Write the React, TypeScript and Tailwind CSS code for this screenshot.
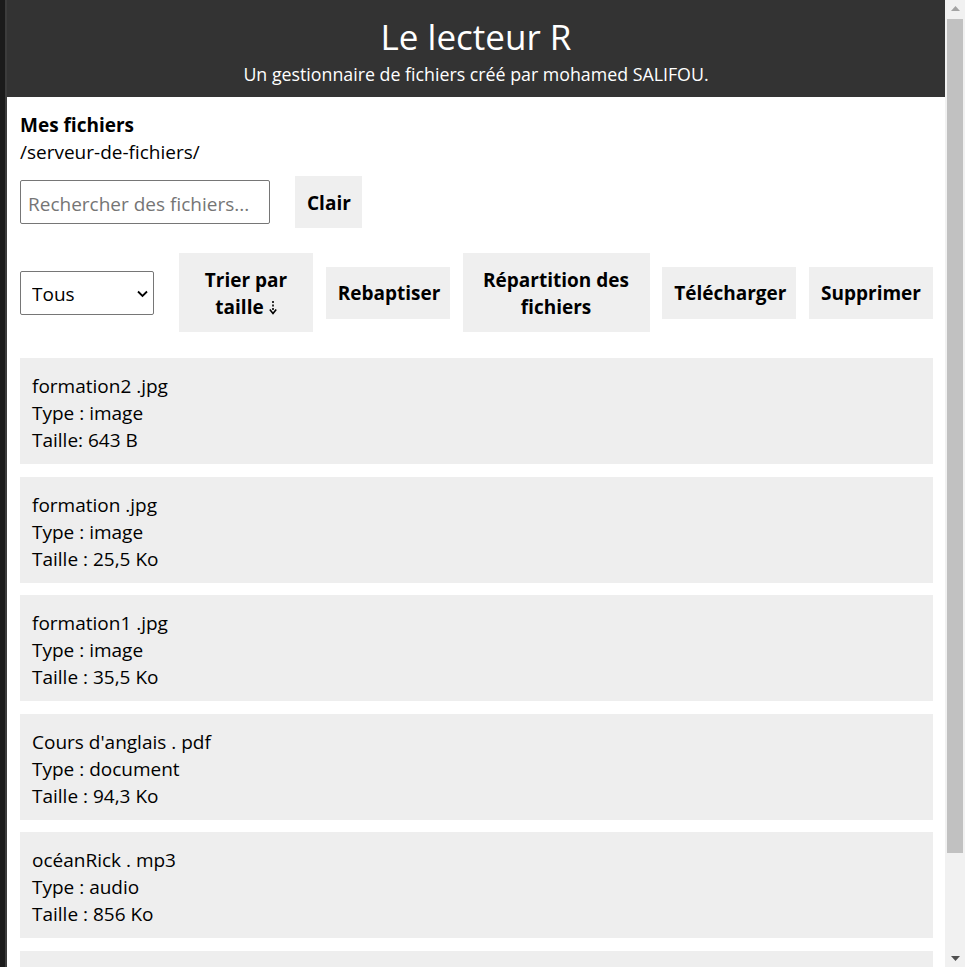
import React from "react";

const files = [
  { name: "formation2 .jpg", type: "image", size: "Taille: 643 B" },
  { name: "formation .jpg", type: "image", size: "Taille : 25,5 Ko" },
  { name: "formation1 .jpg", type: "image", size: "Taille : 35,5 Ko" },
  { name: "Cours d'anglais . pdf", type: "document", size: "Taille : 94,3 Ko" },
  { name: "océanRick . mp3", type: "audio", size: "Taille : 856 Ko" },
];

function Btn({ children, w }: { children: React.ReactNode; w: string }) {
  return (
    <button
      className={`${w} shrink-0 bg-[#efefef] px-3 pt-[13.5px] pb-[11.5px] text-[19px] font-bold leading-[27px] text-black text-center`}
    >
      {children}
    </button>
  );
}

function DashedArrow() {
  return (
    <svg
      className="ml-[5px] inline-block align-[-1px]"
      width="8"
      height="14"
      viewBox="0 0 8 14"
    >
      <path d="M4 0 V2 M4 3.5 V5.5 M4 7 V9" stroke="#000" strokeWidth="1.6" fill="none" />
      <path d="M0.8 8.5 L4 12.5 L7.2 8.5" stroke="#000" strokeWidth="1.6" fill="none" />
    </svg>
  );
}

export default function App() {
  return (
    <div
      className="flex h-[967px] w-[965px] overflow-hidden bg-white text-black"
      style={{ fontFamily: '"Open Sans", "Noto Sans", sans-serif' }}
    >
      <div className="w-[7px] shrink-0 bg-[#1b1b1b] border-r-2 border-[#3c3c3c]" />
      <main className="min-w-0 flex-1">
        <header className="flex h-[97px] flex-col items-center bg-[#333333] pt-[15px] text-white">
          <h1 className="text-[35px] leading-[44px]">Le lecteur R</h1>
          <p className="mt-[2px] text-[17.8px] leading-[27px]">
            Un gestionnaire de fichiers créé par mohamed SALIFOU.
          </p>
        </header>
        <div className="pl-[13px] pr-[12px] pt-[15px]">
          <h2 className="text-[19px] font-bold leading-[27px]">Mes fichiers</h2>
          <p className="text-[19px] leading-[27px]">/serveur-de-fichiers/</p>

          <div className="mt-[10px] flex items-center gap-[25px]">
            <input
              type="text"
              placeholder="Rechercher des fichiers..."
              className="h-[44px] w-[250px] rounded-[2px] border border-[#767676] px-[7px] pt-[3px] text-[19px] placeholder:text-[#757575] outline-none"
            />
            <button className="h-[52px] w-[67px] bg-[#efefef] px-3 pt-[3px] text-[19px] font-bold leading-[27px]">
              Clair
            </button>
          </div>

          <div className="mt-[25px] flex items-center">
            <div className="relative mr-[25px] shrink-0">
              <select className="h-[44px] w-[134px] appearance-none rounded-[2px] border border-[#767676] bg-white pl-[11px] pt-[3px] text-[19px] outline-none">
                <option>Tous</option>
              </select>
              <svg
                className="pointer-events-none absolute right-[6px] top-[19px]"
                width="11"
                height="8"
                viewBox="0 0 11 8"
              >
                <path d="M1 1.5 L5.5 6 L10 1.5" fill="none" stroke="#000" strokeWidth="1.8" />
              </svg>
            </div>
            <div className="flex flex-1 items-center justify-between">
              <Btn w="w-[134px]">
                Trier par
                <br />
                taille
                <DashedArrow />
              </Btn>
              <Btn w="w-[124px]">Rebaptiser</Btn>
              <Btn w="w-[187px]">
                Répartition des
                <br />
                fichiers
              </Btn>
              <Btn w="w-[134px]">Télécharger</Btn>
              <Btn w="w-[124px]">Supprimer</Btn>
            </div>
          </div>

          <div className="mt-[26px] flex flex-col gap-[12.5px]">
            {files.map((f) => (
              <div
                key={f.name}
                className="bg-[#eeeeee] px-3 pt-[15px] pb-[10px] text-[19px] leading-[27px]"
              >
                <div>{f.name}</div>
                <div>Type : {f.type}</div>
                <div>{f.size}</div>
              </div>
            ))}
            <div className="h-[106px] bg-[#eeeeee]" />
          </div>
        </div>
      </main>
      <div className="flex w-[20px] shrink-0 flex-col bg-[#f1f1f1]">
        <div className="flex h-[17px] items-center justify-center">
          <svg width="9" height="5" viewBox="0 0 9 5">
            <path d="M0 5 L4.5 0 L9 5 Z" fill="#a3a3a3" />
          </svg>
        </div>
        <div className="mx-[2px] mt-[2px] h-[834px] bg-[#c1c1c1]" />
        <div className="flex-1" />
        <div className="flex h-[17px] items-center justify-center">
          <svg width="9" height="5" viewBox="0 0 9 5">
            <path d="M0 0 L4.5 5 L9 0 Z" fill="#505050" />
          </svg>
        </div>
      </div>
    </div>
  );
}
